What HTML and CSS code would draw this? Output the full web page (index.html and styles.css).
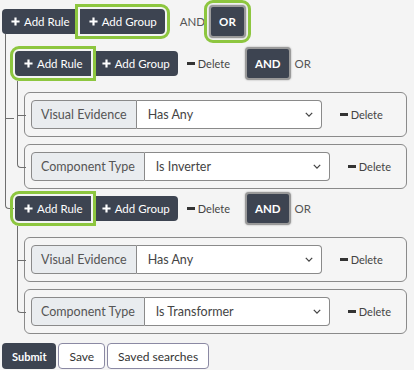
FILE: index.html
```html
<!DOCTYPE html>
<html lang="en">
<head>
  <meta charset="UTF-8" />
  <meta name="viewport" content="width=device-width, initial-scale=1" />
  <title>Query builder</title>
  <link rel="stylesheet" href="styles.css">
</head>
<body>

  <div class="builder">
    <div class="group root">
      <div class="group-head">
        <div class="btn-group">
          <button class="btn"><svg class="plus" viewBox="0 0 10 10"><path d="M5 0.5v9M0.5 5h9" /></svg>Add Rule</button>
          <button class="btn hl"><svg class="plus" viewBox="0 0 10 10"><path d="M5 0.5v9M0.5 5h9" /></svg>Add Group</button>
        </div>
        <div class="cond">
          <button class="cond-opt">AND</button>
          <button class="cond-opt active hl">OR</button>
        </div>
      </div>

      <div class="rules-list">
        <div class="group">
          <div class="group-head">
            <div class="btn-group">
              <button class="btn hl"><svg class="plus" viewBox="0 0 10 10"><path d="M5 0.5v9M0.5 5h9" /></svg>Add Rule</button>
              <button class="btn"><svg class="plus" viewBox="0 0 10 10"><path d="M5 0.5v9M0.5 5h9" /></svg>Add Group</button>
            </div>
            <button class="del"><span class="minus"></span>Delete</button>
            <div class="cond">
              <button class="cond-opt active">AND</button>
              <button class="cond-opt">OR</button>
            </div>
          </div>
          <div class="rules-list">
            <div class="rule">
              <div class="input-group">
                <span class="field">Visual Evidence</span>
                <div class="select-wrap">
                  <select><option>Has Any</option></select>
                  <svg class="chev" viewBox="0 0 10 6"><path d="M1 1l4 4 4-4" /></svg>
                </div>
              </div>
              <button class="del"><span class="minus"></span>Delete</button>
            </div>
            <div class="rule">
              <div class="input-group">
                <span class="field">Component Type</span>
                <div class="select-wrap">
                  <select><option>Is Inverter</option></select>
                  <svg class="chev" viewBox="0 0 10 6"><path d="M1 1l4 4 4-4" /></svg>
                </div>
              </div>
              <button class="del"><span class="minus"></span>Delete</button>
            </div>
          </div>
        </div>

        <div class="group">
          <div class="group-head">
            <div class="btn-group">
              <button class="btn hl"><svg class="plus" viewBox="0 0 10 10"><path d="M5 0.5v9M0.5 5h9" /></svg>Add Rule</button>
              <button class="btn"><svg class="plus" viewBox="0 0 10 10"><path d="M5 0.5v9M0.5 5h9" /></svg>Add Group</button>
            </div>
            <button class="del"><span class="minus"></span>Delete</button>
            <div class="cond">
              <button class="cond-opt active">AND</button>
              <button class="cond-opt">OR</button>
            </div>
          </div>
          <div class="rules-list">
            <div class="rule">
              <div class="input-group">
                <span class="field">Visual Evidence</span>
                <div class="select-wrap">
                  <select><option>Has Any</option></select>
                  <svg class="chev" viewBox="0 0 10 6"><path d="M1 1l4 4 4-4" /></svg>
                </div>
              </div>
              <button class="del"><span class="minus"></span>Delete</button>
            </div>
            <div class="rule">
              <div class="input-group">
                <span class="field">Component Type</span>
                <div class="select-wrap">
                  <select><option>Is Transformer</option></select>
                  <svg class="chev" viewBox="0 0 10 6"><path d="M1 1l4 4 4-4" /></svg>
                </div>
              </div>
              <button class="del"><span class="minus"></span>Delete</button>
            </div>
          </div>
        </div>
      </div>
    </div>

    <div class="actions">
      <button class="btn-submit">Submit</button>
      <button class="btn-light">Save</button>
      <button class="btn-light">Saved searches</button>
    </div>
  </div>

</body>
</html>
```

FILE: styles.css
```css
* {
  box-sizing: border-box;
}

body {
  margin: 0;
  padding: 5px 2px 0;
  background: #f4f4f4;
  font-family: Lato, "Open Sans", sans-serif;
  font-size: 12px;
  color: #333;
}

button {
  font-family: inherit;
  cursor: pointer;
  white-space: nowrap;
}

.group {
  position: relative;
}

.group-head {
  display: flex;
  align-items: center;
  height: 33px;
}

.btn-group {
  display: flex;
}

.btn {
  display: inline-flex;
  align-items: center;
  gap: 4px;
  height: 25px;
  padding: 0 8px 0 9px;
  border: none;
  background: #3d4451;
  color: #fff;
  font-size: 11.5px;
}

.btn-group .btn:first-child {
  border-radius: 4px 0 0 4px;
}

.btn-group .btn:last-child {
  border-radius: 0 4px 4px 0;
  margin-left: 2px;
}

.plus {
  width: 9px;
  height: 9px;
  stroke: #fff;
  stroke-width: 2.4;
}

.hl {
  position: relative;
  z-index: 1;
  outline: 3px solid #8dc63f;
  outline-offset: 2px;
}

.cond {
  display: flex;
  align-items: center;
  margin-left: 11px;
}

.cond-opt {
  border: none;
  background: transparent;
  color: #555;
  font-size: 11.5px;
  padding: 0 4px;
}

.cond-opt.active {
  height: 33px;
  padding: 0 8px;
  background: #3d4451;
  color: #fff;
  font-weight: 700;
  border: 2px solid #9a9a9a;
  border-radius: 4px;
  box-shadow: 0 0 2px rgba(0, 0, 0, 0.35);
}

.del {
  display: inline-flex;
  align-items: center;
  gap: 3px;
  border: none;
  background: transparent;
  color: #444;
  font-size: 11px;
  padding: 0 4px 0 0;
}

.minus {
  width: 8px;
  height: 2.5px;
  background: #333;
}

.group-head .del {
  margin-left: 9px;
}

/* tree */
.root > .rules-list {
  margin: 9px 0 0 8px;
}

.root > .rules-list > .group {
  padding: 0 5px;
}

.root > .rules-list > .group + .group {
  margin-top: 3px;
}

.group .group > .rules-list {
  padding: 12px 0 0 9px;
}

.rules-list > *::before,
.rules-list > *::after {
  content: "";
  position: absolute;
  border-color: #6e6e6e;
  border-style: solid;
}

.root > .rules-list > .group::before {
  left: -5px;
  width: 8px;
  top: -13px;
  height: calc(50% + 13px);
  border-width: 0 0 1px 1px;
}

.root > .rules-list > .group::after {
  left: -5px;
  top: 50%;
  height: calc(50% + 3px);
  border-width: 0 0 0 1px;
}

.root > .rules-list > .group:last-child::before {
  top: -3px;
  height: 19px;
  border-radius: 0 0 0 4px;
}

.root > .rules-list > .group:last-child::after {
  display: none;
}

.rule {
  position: relative;
  display: flex;
  align-items: center;
  height: 45px;
  padding: 0 6px;
  border: 1px solid #8a8a8a;
  border-radius: 6px;
  background: #f5f5f5;
}

.rule + .rule {
  margin-top: 7px;
}

.rule::before {
  left: -8px;
  width: 8px;
  top: -9px;
  height: calc(50% + 9px);
  border-width: 0 0 1px 1px;
}

.rule:first-child::before {
  top: -12px;
  height: calc(50% + 12px);
}

.rule::after {
  left: -8px;
  top: 50%;
  height: calc(50% + 9px);
  border-width: 0 0 0 1px;
}

.rule:last-child::before {
  border-radius: 0 0 0 4px;
}

.rule:last-child::after {
  display: none;
}

.input-group {
  display: flex;
  height: 29px;
}

.field {
  display: flex;
  align-items: center;
  padding: 0 9px;
  background: #e9ecef;
  border: 1px solid #8a8a8a;
  border-radius: 4px 0 0 4px;
  color: #555;
  font-size: 12.5px;
  white-space: nowrap;
}

.select-wrap {
  position: relative;
  width: 185px;
}

.select-wrap select {
  width: 100%;
  height: 100%;
  appearance: none;
  -webkit-appearance: none;
  padding: 0 24px 0 11px;
  border: 1px solid #8a8a8a;
  border-left: none;
  border-radius: 0 4px 4px 0;
  background: #fff;
  color: #444;
  font-family: inherit;
  font-size: 12.5px;
}

.chev {
  position: absolute;
  right: 9px;
  top: 12px;
  width: 8px;
  height: 5px;
  fill: none;
  stroke: #444;
  stroke-width: 1.6;
  pointer-events: none;
}

.rule .del {
  margin-left: 18px;
}

.actions {
  display: flex;
  gap: 2px;
  margin-top: 9px;
}

.btn-submit {
  height: 26px;
  padding: 0 10px;
  border: none;
  border-radius: 4px;
  background: #3d4451;
  color: #fff;
  font-size: 11px;
  font-weight: 700;
}

.btn-light {
  height: 26px;
  padding: 0 10px;
  border: 1px solid #8b89a3;
  border-radius: 4px;
  background: #fff;
  color: #333;
  font-size: 12px;
}
```
